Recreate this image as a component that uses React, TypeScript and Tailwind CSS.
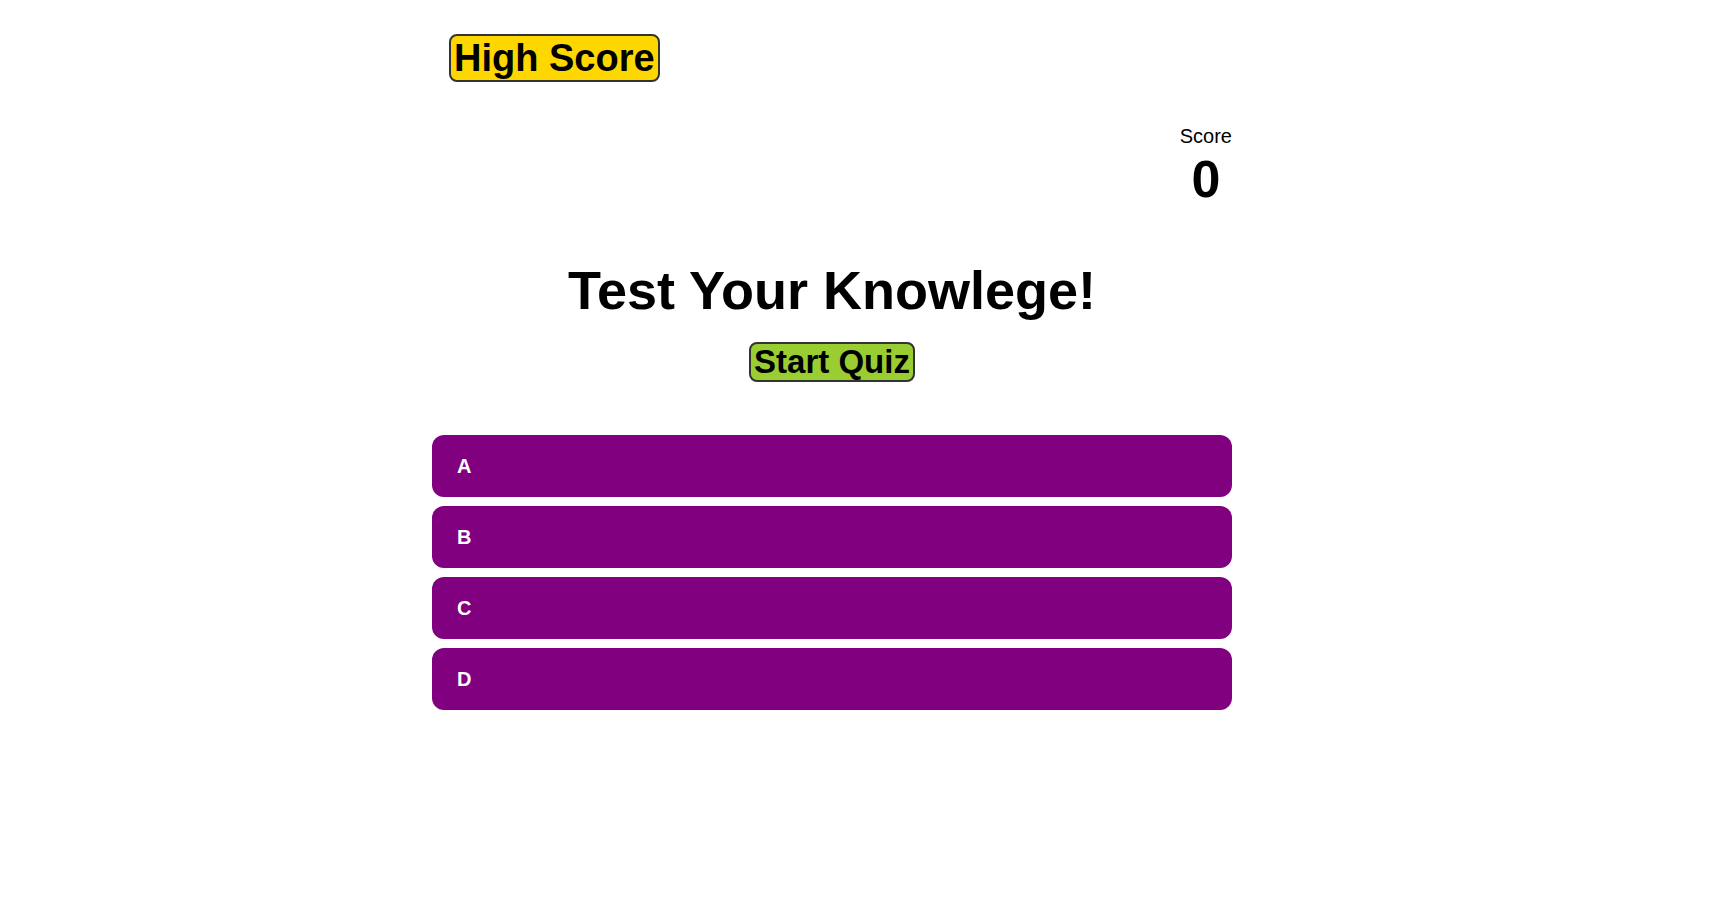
import { useState } from 'react';

const choices = ['A', 'B', 'C', 'D'];

export default function App() {
  const [score] = useState(0);

  return (
    <div className="min-h-screen bg-white text-black font-['Liberation_Sans',Arial,sans-serif]">
      <div className="ml-[432px] w-[800px]">
        {/* top bar */}
        <header className="pt-[34px] pl-[17px]">
          <button className="h-[48px] px-[3px] text-[38px] leading-[42px] font-bold bg-[#ffd700] border-2 border-[#333] rounded-[8px]">
            High Score
          </button>
        </header>

        {/* score */}
        <div className="mt-[43px] flex justify-end">
          <div className="flex flex-col items-center">
            <span className="text-[20px] leading-[23px]">Score</span>
            <span className="text-[52px] leading-[62px] font-bold">{score}</span>
          </div>
        </div>

        {/* intro */}
        <div className="mt-[49px] flex flex-col items-center">
          <h1 className="text-[54px] leading-[62px] font-bold">Test Your Knowlege!</h1>
          <button className="mt-[21px] h-[40px] px-[3px] text-[33px] leading-[34px] font-bold bg-[#9acd32] border-2 border-[#333] rounded-[8px]">
            Start Quiz
          </button>
        </div>

        {/* answers */}
        <div className="mt-[53px] flex flex-col gap-[9px]">
          {choices.map(c => (
            <button key={c} className="h-[62px] w-full flex items-center px-[25px] bg-[#800080] text-white text-[20px] font-bold rounded-[12px] text-left">
              {c}
            </button>
          ))}
        </div>
      </div>
    </div>
  );
}
